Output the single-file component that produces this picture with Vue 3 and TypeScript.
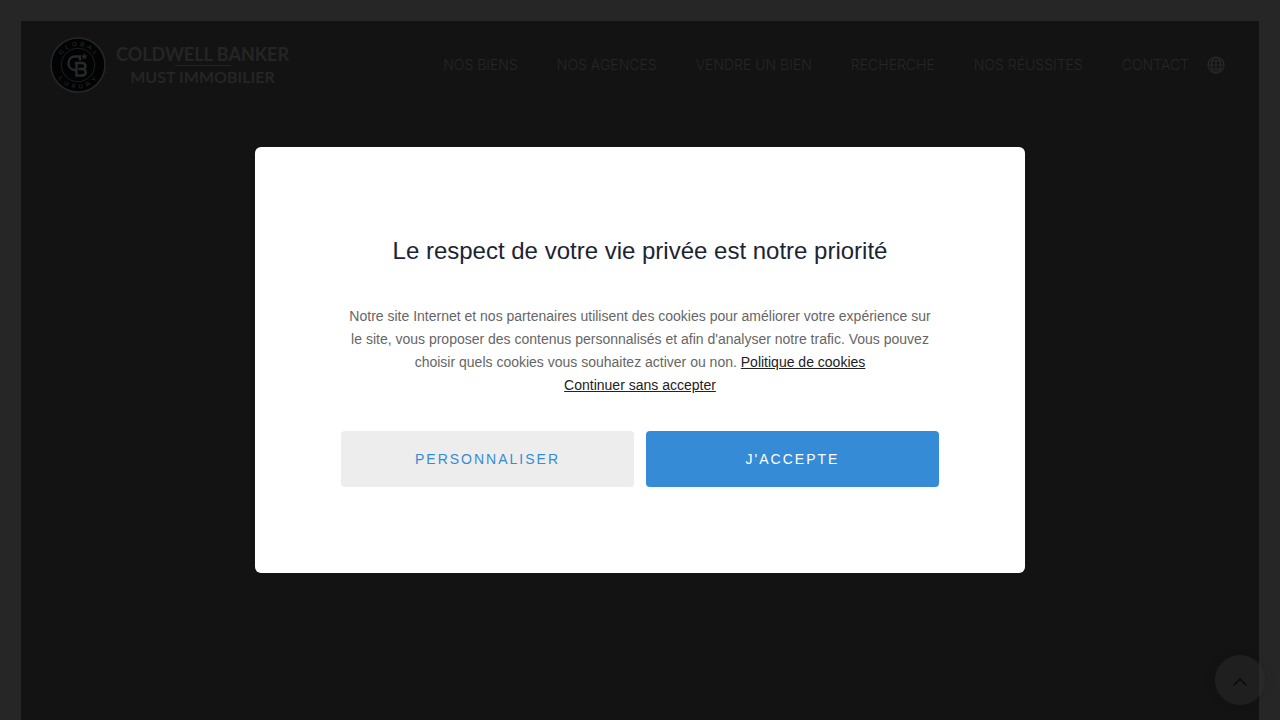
<script setup lang="ts">
import { ref } from 'vue'

const links: string[] = [
  'NOS BIENS',
  'NOS AGENCES',
  'VENDRE UN BIEN',
  'RECHERCHE',
  'NOS RÉUSSITES',
  'CONTACT',
]
const consentOpen = ref(true)

function closeConsent(): void {
  consentOpen.value = false
}
</script>

<template>
  <div class="page">
    <header class="header">
      <a class="brand" href="#" aria-label="Coldwell Banker Must Immobilier">
        <svg class="seal" viewBox="0 0 56 56" aria-hidden="true">
          <defs>
            <path id="arc-top" d="M9 28a19 19 0 0 1 38 0" />
            <path id="arc-bottom" d="M4.500 28a23.500 23.500 0 0 0 47 0" />
          </defs>
          <circle cx="28" cy="28" r="27" fill="#020304" stroke="#262626" stroke-width="1.600" />
          <circle cx="28" cy="28" r="16.700" fill="none" stroke="#222222" stroke-width="0.900" />
          <text class="seal-text seal-top" text-anchor="middle">
            <textPath href="#arc-top" startOffset="52%">GLOBAL</textPath>
          </text>
          <text class="seal-text seal-bottom" text-anchor="middle">
            <textPath href="#arc-bottom" startOffset="52%">LUXURY</textPath>
          </text>
          <g fill="none" stroke="#292929" stroke-width="2.400">
            <path d="M30 23.500V19.500H25C21 19.500 18.500 22.500 18.500 26.200C18.500 30 21 33 25 33H25.500" />
            <path d="M25 26H32.500A3 3 0 0 1 32.500 32H28.500M26.500 26V38.500H32.500A3.250 3.250 0 0 0 32.500 32" />
          </g>
          <path
            d="M34.300 16l.9 2.400 2.600.1-2 1.600.7 2.500-2.200-1.500-2.100 1.500.7-2.500-2-1.600 2.600-.1z"
            fill="#292929"
          />
        </svg>
        <span class="wordmark">
          <span class="word-top">COLDWELL BANKER</span>
          <span class="word-rule"></span>
          <span class="word-bottom">MUST IMMOBILIER</span>
        </span>
      </a>
      <nav class="nav" aria-label="Navigation principale">
        <a v-for="link in links" :key="link" class="nav-link" href="#">{{ link }}</a>
        <button class="language" type="button" aria-label="Langue">
          <svg viewBox="0 0 18 18" fill="none" stroke="#292929" stroke-width="1.200" aria-hidden="true">
            <circle cx="9" cy="9" r="8" />
            <ellipse cx="9" cy="9" rx="4.500" ry="8" />
            <path d="M9 1v16M1 9h16M2.500 5h13M2.500 13h13" />
          </svg>
        </button>
      </nav>
    </header>

    <div class="frame"></div>
    <button class="to-top" type="button" aria-label="Haut de page">
      <svg viewBox="0 0 16 10" fill="none" stroke="#090909" stroke-width="1.300" aria-hidden="true">
        <path d="M1.500 8.500L8 2l6.500 6.500" />
      </svg>
    </button>

    <div v-if="consentOpen" class="backdrop">
      <section class="dialog" role="dialog" aria-modal="true" aria-labelledby="consent-title">
        <h2 id="consent-title" class="title">Le respect de votre vie privée est notre priorité</h2>
        <p class="message">
          Notre site Internet et nos partenaires utilisent des cookies pour améliorer votre
          expérience sur le site, vous proposer des contenus personnalisés et afin d'analyser
          notre trafic. Vous pouvez choisir quels cookies vous souhaitez activer ou non.
          <a href="#">Politique de cookies</a><br />
          <a href="#" @click.prevent="closeConsent">Continuer sans accepter</a>
        </p>
        <div class="actions">
          <button class="action customise" type="button">PERSONNALISER</button>
          <button class="action accept" type="button" @click="closeConsent">J'ACCEPTE</button>
        </div>
      </section>
    </div>
  </div>
</template>

<style>
body {
  margin: 0;
  background: #131313;
}
</style>

<style scoped>
.page {
  min-height: 100vh;
  box-sizing: border-box;
  padding: 21px 21px 0;
  background: #131313;
  font-family: 'Liberation Sans', Arial, sans-serif;
}
.header {
  display: flex;
  align-items: center;
  justify-content: space-between;
  padding: 16px 34px 16px 29px;
}
.brand {
  display: flex;
  align-items: center;
  gap: 10px;
  color: #252525;
  text-decoration: none;
}
.seal {
  width: 56px;
  height: 56px;
}
.seal-text {
  font-family: 'Liberation Sans', Arial, sans-serif;
  font-size: 6px;
  fill: #2e2e2e;
}
.seal-top {
  letter-spacing: 3px;
}
.seal-bottom {
  letter-spacing: 4px;
}
.wordmark {
  display: flex;
  flex-direction: column;
  align-items: center;
  font-family: Lato, sans-serif;
  font-weight: 700;
  white-space: nowrap;
}
.word-top {
  font-size: 18px;
  line-height: 22px;
}
.word-rule {
  width: 56px;
  height: 1px;
  background: #222222;
}
.word-bottom {
  font-size: 16px;
  line-height: 22px;
}
.nav {
  display: flex;
  align-items: center;
  gap: 39px;
}
.nav-link {
  color: #262626;
  font-family: Inter, sans-serif;
  font-size: 14px;
  font-weight: 300;
  line-height: 20px;
  text-decoration: none;
  white-space: nowrap;
}
.language {
  width: 18px;
  height: 18px;
  margin-left: -21px;
  padding: 0;
  border: 0;
  background: none;
}
.language svg {
  display: block;
  width: 18px;
  height: 18px;
}
.to-top {
  position: fixed;
  right: 15px;
  bottom: 15px;
  display: grid;
  place-items: center;
  width: 50px;
  height: 50px;
  padding: 4px 0 0;
  border: 0;
  border-radius: 50%;
  background: rgba(43, 43, 43, 0.5);
  box-shadow: 0 0 12px rgba(0, 0, 0, 0.1);
}
.to-top svg {
  width: 16px;
  height: 10px;
}
.frame {
  position: fixed;
  inset: 0;
  border: 21px solid #262626;
  border-bottom: 0;
  pointer-events: none;
}
.backdrop {
  position: fixed;
  inset: 0;
  display: grid;
  place-items: center;
  padding: 20px;
}
.dialog {
  box-sizing: border-box;
  width: 100%;
  max-width: 770px;
  padding: 86px;
  border-radius: 6px;
  background: #ffffff;
  text-align: center;
}
.title {
  margin: 0 0 36px;
  color: #1c2434;
  font-size: 24px;
  font-weight: 400;
  line-height: 36px;
}
.message {
  margin: 0 0 34px;
  padding: 0 4px;
  color: #666666;
  font-size: 14px;
  line-height: 23px;
}
.message a {
  color: #222222;
}
.actions {
  display: grid;
  grid-template-columns: 1fr 1fr;
  gap: 12px;
}
.action {
  height: 56px;
  padding: 0 16px;
  border: 0;
  border-radius: 4px;
  font-family: inherit;
  font-size: 14px;
  letter-spacing: 2px;
  cursor: pointer;
}
.customise {
  background: #ededed;
  color: #368bd6;
}
.accept {
  background: #368bd6;
  color: #ffffff;
}
</style>
